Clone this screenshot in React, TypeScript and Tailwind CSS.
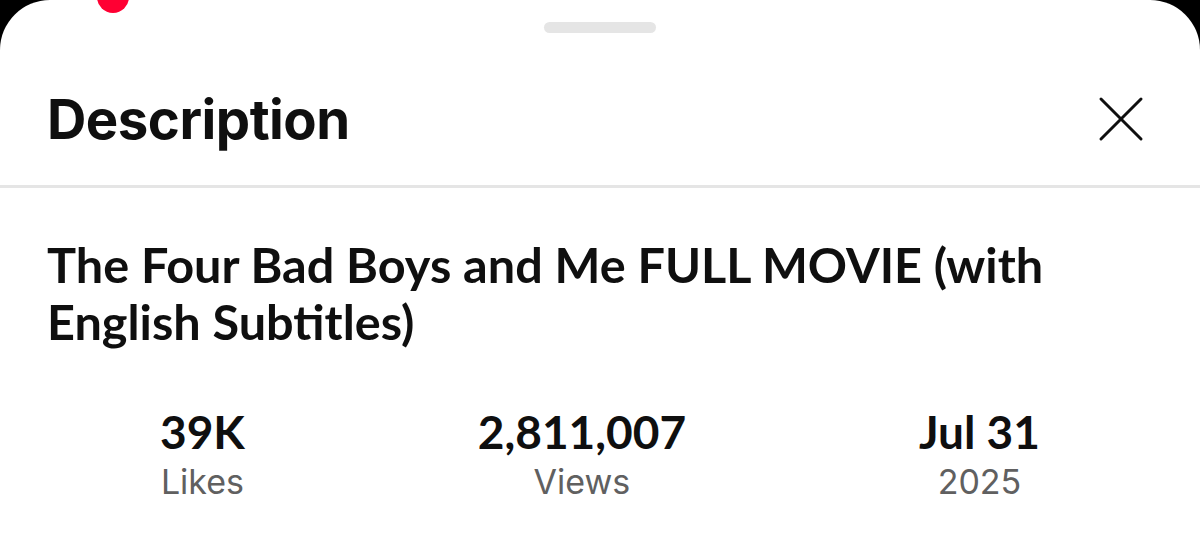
import { X } from "lucide-react"

const stats = [
  { value: "39K", label: "Likes" },
  { value: "2,811,007", label: "Views" },
  { value: "Jul 31", label: "2025" },
]

export default function App() {
  return (
    <div className="relative w-[1200px] h-[535px] overflow-hidden bg-black">
      <div className="h-full rounded-t-[50px] bg-white">
        <div className="flex justify-center pt-[22px]">
          <div className="h-[11px] w-[112px] rounded-full bg-[#e5e5e5]" />
        </div>
        <div className="flex h-[152px] items-center justify-between pl-[47px] pr-[39px] pt-[20px]">
          <h1 className="font-['Inter',sans-serif] text-[54.5px] font-bold leading-none tracking-[-0.5px] text-[#0f0f0f]">
            Description
          </h1>
          <X className="h-[80px] w-[80px] text-[#0f0f0f]" strokeWidth={0.9} />
        </div>
        <div className="h-[3px] bg-[#e5e5e5]" />
        <div className="px-[47px] pt-[48px]">
          <h2 className="font-['Lato',sans-serif] text-[48.6px] font-bold leading-[57px] text-[#0f0f0f]">
            The Four Bad Boys and Me FULL MOVIE (with English Subtitles)
          </h2>
        </div>
        <div className="flex justify-between px-[160px] pt-[56px]">
          {stats.map((s) => (
            <div key={s.label} className="flex flex-col items-center">
              <span className="font-['Lato',sans-serif] text-[46px] font-bold leading-[52px] text-[#0f0f0f]">
                {s.value}
              </span>
              <span className="font-['Inter',sans-serif] text-[34px] leading-[48px] text-[#606060]">
                {s.label}
              </span>
            </div>
          ))}
        </div>
      </div>
      <div className="absolute left-[97px] top-[-19px] h-[32px] w-[32px] rounded-full bg-[#ff0033]" />
    </div>
  )
}
